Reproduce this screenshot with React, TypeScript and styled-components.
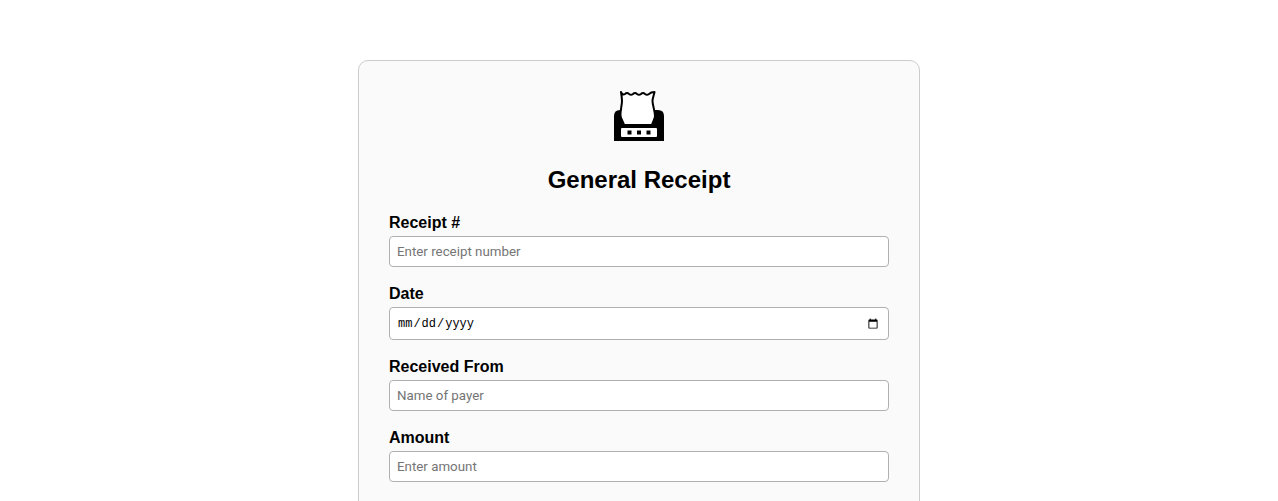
import React from 'react';
import styled, { createGlobalStyle } from 'styled-components';

const GlobalStyle = createGlobalStyle`
  * {
    box-sizing: border-box;
  }

  body {
    margin: 0;
    background: #fff;
    color: #000;
    font-family: 'Liberation Sans', Arial, sans-serif;
  }
`;

const fields = [
  { label: 'Receipt #', type: 'text', placeholder: 'Enter receipt number' },
  { label: 'Date', type: 'date' },
  { label: 'Received From', type: 'text', placeholder: 'Name of payer' },
  { label: 'Amount', type: 'text', placeholder: 'Enter amount' },
];

const ReceiptIcon = () => (
  <svg width="50" height="50" viewBox="0 0 50 50" aria-hidden="true">
    <path fill="#000" d="M0 25Q0 19 6 19H44Q50 19 50 25V50H0Z" />
    <path
      fill="#fff"
      stroke="#000"
      strokeWidth="2"
      strokeLinejoin="round"
      d="M7 1Q8.500 4.500 11 3Q13 1 15 3Q17 4.500 19 3Q21 1 23 3Q25 4.500 27 3Q29 1 31 3Q33 4.500 35 3Q37 1 40.500 1C40 4 38.500 7 38.500 10 38.500 14 41 20 41 25 41 28 39 30 38 34H10C9 30 7 28 6.500 25 6 21 8 14 8 10 8 7 7.500 4 7 1Z"
    />
    <rect x="7" y="37" width="36" height="9" rx="1" fill="#fff" />
    <rect x="13.500" y="39.500" width="4" height="4" fill="#000" />
    <rect x="23" y="39.500" width="4" height="4" fill="#000" />
    <rect x="32.500" y="39.500" width="4" height="4" fill="#000" />
  </svg>
);

const App = () => (
  <>
    <GlobalStyle />
    <Card>
      <Logo>
        <ReceiptIcon />
      </Logo>
      <Title>General Receipt</Title>
      <Form>
        {fields.map((field) => (
          <Field key={field.label}>
            <Label>{field.label}</Label>
            <Input type={field.type} placeholder={field.placeholder} />
          </Field>
        ))}
      </Form>
    </Card>
  </>
);

const Card = styled.div`
  width: 562px;
  margin: 60px auto 0;
  padding: 30px 30px 120px;
  background: #fafafa;
  border: 1px solid #ccc;
  border-radius: 10px;
`;

const Logo = styled.div`
  display: flex;
  justify-content: center;
  height: 50px;

  svg {
    display: block;
  }
`;

const Title = styled.h2`
  margin: 25px 0 0;
  font-size: 24px;
  line-height: 28px;
  font-weight: 700;
  text-align: center;
`;

const Form = styled.form`
  display: flex;
  flex-direction: column;
  gap: 18px;
  margin-top: 20px;
`;

const Field = styled.div`
  display: flex;
  flex-direction: column;
`;

const Label = styled.label`
  margin-bottom: 4px;
  font-size: 16px;
  line-height: 18px;
  font-weight: 700;
`;

const Input = styled.input`
  width: 100%;
  height: ${({ type }) => (type === 'date' ? '33px' : '31px')};
  padding: 0 7px;
  background: #fff;
  border: 1px solid #b0b0b0;
  border-radius: 4px;
  font-family: ${({ type }) => (type === 'date' ? "'Liberation Mono', monospace" : 'Roboto, sans-serif')};
  font-size: ${({ type }) => (type === 'date' ? '12px' : '13.333px')};
`;

export default App;
